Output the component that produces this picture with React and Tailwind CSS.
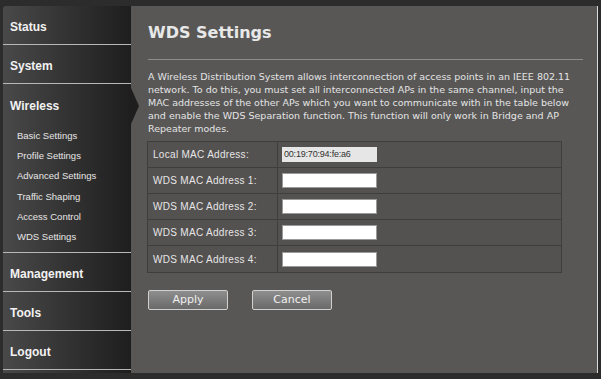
import React from 'react';

const menuHead = "h-[39px] flex items-center pl-[7px] pt-[4px] text-[12px] font-bold text-[#f2f2f2] border-b border-[#b8b8b8]";
const subItems = ['Basic Settings', 'Profile Settings', 'Advanced Settings', 'Traffic Shaping', 'Access Control', 'WDS Settings'];
const rows = ['WDS MAC Address 1:', 'WDS MAC Address 2:', 'WDS MAC Address 3:', 'WDS MAC Address 4:'];

const App = () => {
  return (
    <div className="w-[601px] h-[379px] bg-[#2c2c2c] pt-[6px] pl-[3px] pr-[3px] pb-[6px] flex" style={{ fontFamily: '"Liberation Sans", Arial, sans-serif' }}>
      {/* Sidebar */}
      <div className="relative w-[128px] h-full flex flex-col bg-gradient-to-r from-[#4a4949] to-[#1f1e1e] rounded-tl-[3px]">
        <div className={menuHead}>Status</div>
        <div className={menuHead}>System</div>
        <div className="relative flex flex-col border-b border-[#b8b8b8] h-[169px]">
          <div className="h-[40px] flex items-center pl-[7px] pt-[4px] text-[12px] font-bold text-[#f2f2f2]">Wireless</div>
          <div className="flex flex-col pl-[14px] pt-[2px]">
            {subItems.map((s) => (
              <div key={s} className="h-[20.2px] flex items-center text-[9.5px] text-[#e6e6e6]">{s}</div>
            ))}
          </div>
        </div>
        <div className={menuHead}>Management</div>
        <div className={menuHead}>Tools</div>
        <div className={menuHead}>Logout</div>
        {/* pointer arrow */}
        <svg className="absolute left-[127px] top-[82px]" width="10" height="36" viewBox="0 0 10 36">
          <polygon points="0,0 1,0 9,18 1,36 0,36" fill="#1f1e1e" />
        </svg>
      </div>

      {/* Content */}
      <div className="flex-1 h-full bg-[#585756] border-r border-[#d8d8d8] pl-[17px] pr-[14px] flex flex-col" style={{ fontFamily: '"DejaVu Sans", Verdana, sans-serif' }}>
        <h1 className="mt-[17px] text-[16px] font-bold text-[#e8e8e8] leading-[20px]">WDS Settings</h1>
        <div className="mt-[16px] h-px bg-[#8c8c8c]" />
        <p className="mt-[10px] text-[9.5px] leading-[13px] text-[#e4e4e4] whitespace-nowrap">
          A Wireless Distribution System allows interconnection of access points in an IEEE 802.11<br />
          network. To do this, you must set all interconnected APs in the same channel, input the<br />
          MAC addresses of the other APs which you want to communicate with in the table below<br />
          and enable the WDS Separation function. This function will only work in Bridge and AP<br />
          Repeater modes.
        </p>

        <div className="mt-[6px] -ml-[1px] w-[415px] border border-[#3e3e3e] bg-[#545151]" style={{ fontFamily: '"Liberation Sans", Arial, sans-serif' }}>
          <div className="h-[26px] flex border-b border-[#3e3e3e]">
            <div className="w-[130px] border-r border-[#3e3e3e] flex items-center pl-[5px] text-[10px] tracking-[0.3px] text-[#e6e6e6]">Local MAC Address:</div>
            <div className="flex items-center pl-[4px]">
              <div className="w-[95px] h-[15px] bg-[#e6e6e6] flex items-center pl-[2px] text-[9px] tracking-[-0.2px] text-[#333]">00:19:70:94:fe:a6</div>
            </div>
          </div>
          {rows.map((r, i) => (
            <div key={r} className={`h-[26px] flex ${i < 3 ? 'border-b border-[#3e3e3e]' : ''}`}>
              <div className="w-[130px] border-r border-[#3e3e3e] flex items-center pl-[5px] text-[10px] tracking-[0.3px] text-[#e6e6e6]">{r}</div>
              <div className="flex items-center pl-[4px]">
                <input type="text" className="w-[95px] h-[15px] bg-white border border-[#9a9a9a] outline-none" />
              </div>
            </div>
          ))}
        </div>

        <div className="mt-[17px] flex gap-[24px]">
          <button className="w-[80px] h-[20px] rounded-[2px] border border-[#d0d0d0] bg-gradient-to-b from-[#8e8e8e] to-[#6a6a6a] text-[11px] text-[#f0f0f0]">Apply</button>
          <button className="w-[80px] h-[20px] rounded-[2px] border border-[#d0d0d0] bg-gradient-to-b from-[#8e8e8e] to-[#6a6a6a] text-[11px] text-[#f0f0f0]">Cancel</button>
        </div>
      </div>
    </div>
  );
};

export default App;
